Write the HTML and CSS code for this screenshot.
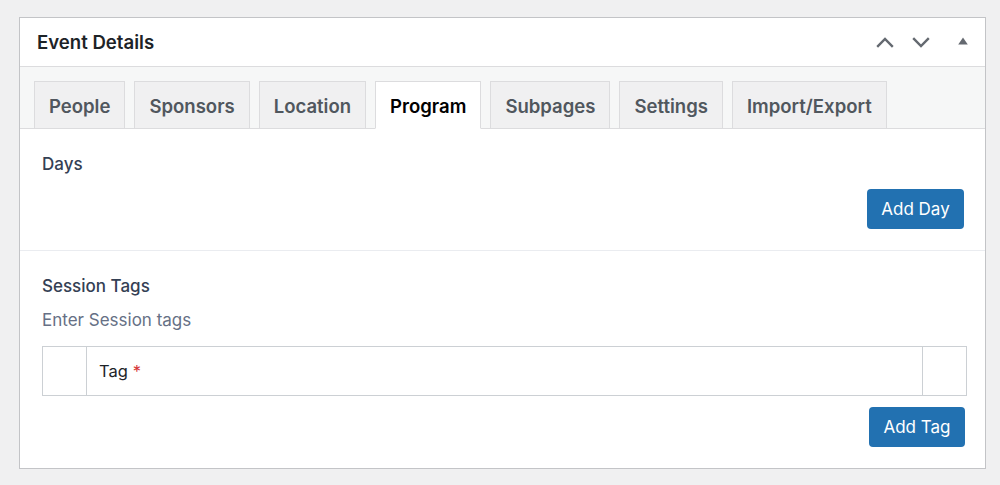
FILE: index.html
```html
<!DOCTYPE html>
<html lang="en">
<head>
<meta charset="utf-8">
<title>Event Details</title>
<link rel="stylesheet" href="styles.css">
</head>
<body>
<div class="panel">
  <div class="panel-header">
    <h2 class="panel-title">Event Details</h2>
    <div class="panel-actions">
      <svg class="icon chev" width="18" height="11" viewBox="0 0 18 11"><path d="M1.2 9.8 L9 2 L16.8 9.8" fill="none" stroke="#646970" stroke-width="2.4"/></svg>
      <svg class="icon chev" width="18" height="11" viewBox="0 0 18 11"><path d="M1.2 1.2 L9 9 L16.8 1.2" fill="none" stroke="#646970" stroke-width="2.4"/></svg>
      <svg class="icon tri" width="10" height="8" viewBox="0 0 10 8"><path d="M5 0.5 L9.8 7.5 L0.2 7.5 Z" fill="#646970"/></svg>
    </div>
  </div>
  <div class="tabbar">
    <span class="tab">People</span>
    <span class="tab">Sponsors</span>
    <span class="tab">Location</span>
    <span class="tab active">Program</span>
    <span class="tab">Subpages</span>
    <span class="tab">Settings</span>
    <span class="tab">Import/Export</span>
  </div>
  <div class="field field-days">
    <div class="label">Days</div>
    <div class="actions"><span class="button btn-day">Add Day</span></div>
  </div>
  <div class="field field-tags">
    <div class="label">Session Tags</div>
    <div class="desc">Enter Session tags</div>
    <div class="table">
      <div class="cell cell-order"></div>
      <div class="cell cell-main">Tag <span class="req">*</span></div>
      <div class="cell cell-remove"></div>
    </div>
    <div class="actions"><span class="button btn-tag">Add Tag</span></div>
  </div>
</div>
</body>
</html>
```

FILE: styles.css
```css
* { box-sizing: border-box; }
html, body { margin: 0; padding: 0; }
body {
  background: #f0f0f1;
  font-family: "Inter", "Noto Sans", sans-serif;
  color: #1d2327;
  width: 1000px;
  height: 485px;
  overflow: hidden;
}
.panel {
  margin: 17px 0 0 19px;
  width: 967px;
  background: #fff;
  border: 1px solid #c3c4c7;
}
.panel-header {
  height: 49px;
  border-bottom: 1px solid #dcdcde;
  display: flex;
  align-items: center;
  padding: 0 17px 0 17px;
}
.panel-title {
  margin: 0;
  font-size: 18.6px;
  font-weight: 600;
  flex: 1;
  color: #1d2327;
}
.panel-actions {
  display: flex;
  align-items: center;
  gap: 18px;
}
.icon { display: block; }
.tri { margin-left: 10px; margin-top: -3px; }
.tabbar {
  background: #f6f7f7;
  border-bottom: 1px solid #dcdcde;
  padding: 14px 0 0 14px;
  display: flex;
  gap: 9px;
  height: 62px;
}
.tab {
  height: 48px;
  margin-bottom: -1px;
  padding: 1px 14px 0;
  border: 1px solid #dcdcde;
  background: #f0f0f1;
  color: #50575e;
  font-size: 18.55px;
  font-weight: 600;
  display: flex;
  align-items: center;
}
.tab.active {
  background: #fff;
  border-bottom-color: #fff;
  color: #000;
}
.field {
  padding: 22px 18px 21px 22px;
}
.field-days {
  border-bottom: 1px solid #eaecf0;
}
.field-tags {
  padding-top: 23px;
}
.label {
  font-size: 17px;
  font-weight: 500;
  line-height: 24px;
  color: #344054;
}
.field-days .label { margin-top: 1px; margin-bottom: -1px; }
.desc {
  margin-top: 10px;
  font-size: 17px;
  line-height: 24px;
  color: #667085;
}
.actions {
  display: flex;
  justify-content: flex-end;
}
.field-days .actions { margin-top: 14px; padding-right: 3px; }
.field-tags .actions { margin-top: 11px; padding-right: 2px; }
.button {
  background: #2271b1;
  color: #fff;
  border-radius: 4px;
  height: 40px;
  font-size: 17px;
  display: flex;
  align-items: center;
  justify-content: center;
}
.btn-day { width: 97px; }
.btn-tag { width: 96px; }
.table {
  margin-top: 14px;
  display: flex;
  height: 50px;
  border: 1px solid #ccd0d4;
}
.cell { height: 100%; }
.cell-order { width: 44px; border-right: 1px solid #ccd0d4; }
.cell-main {
  flex: 1;
  display: flex;
  align-items: center;
  padding-left: 12px;
  font-size: 16.5px;
  color: #1d2327;
}
.req { color: #d63638; margin-left: 5px; }
.cell-remove { width: 44px; border-left: 1px solid #ccd0d4; }
```
